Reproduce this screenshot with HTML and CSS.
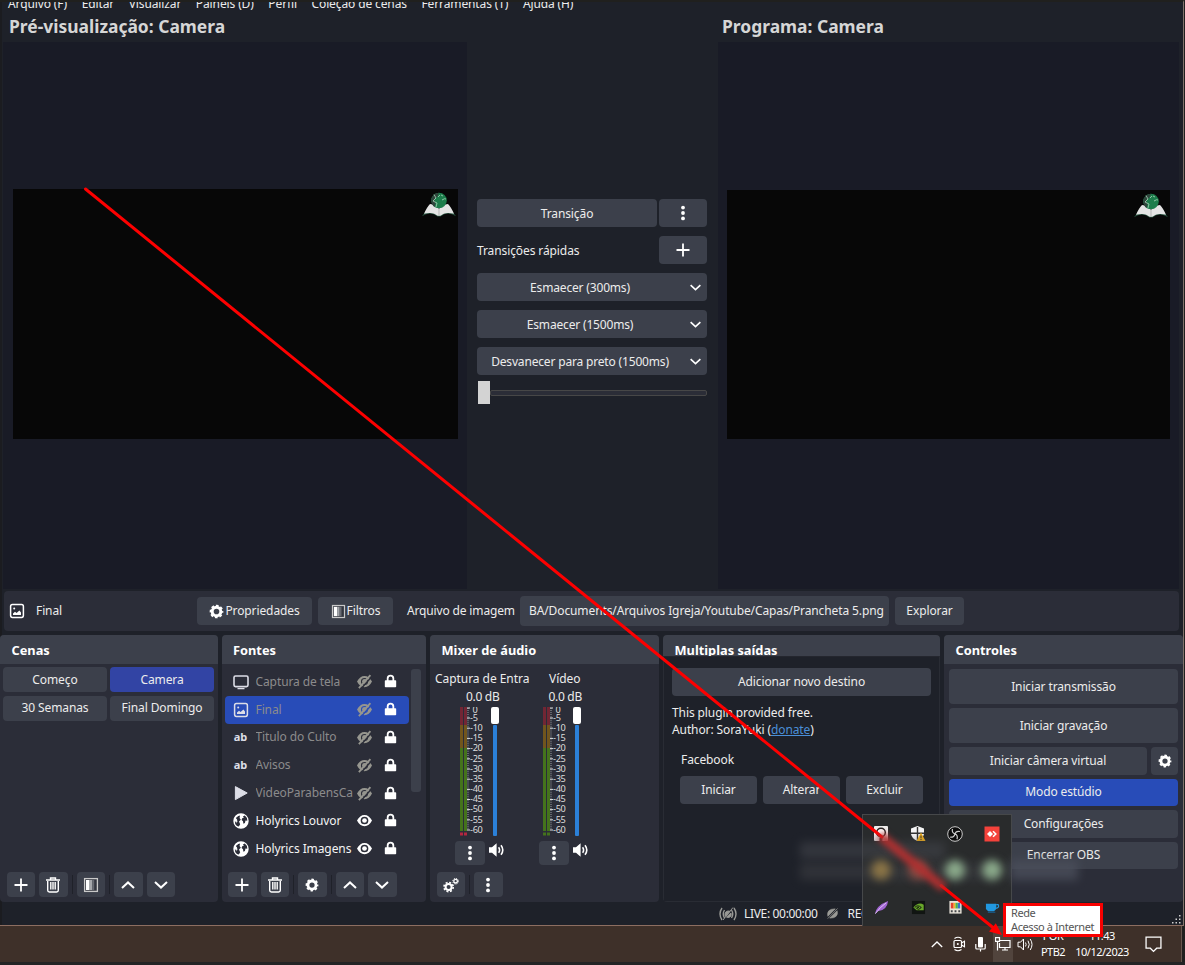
FILE: index.html
```html
<!DOCTYPE html>
<html lang="pt-BR">
<head>
<meta charset="utf-8">
<title>OBS Studio</title>
<link rel="stylesheet" href="styles.css">
</head>
<body>
<svg class="sprite" width="0" height="0">
  <defs>
    <mask id="slash" maskUnits="userSpaceOnUse" x="0" y="0" width="16" height="16"><rect width="16" height="16" fill="#fff"/><path d="M16.500 2L4 16" stroke="#000" stroke-width="1.600"/></mask>
    <symbol id="plus" viewBox="0 0 16 16"><path d="M8 1.500v13M1.500 8h13" fill="none" stroke="currentColor" stroke-width="1.800"/></symbol>
    <symbol id="dots" viewBox="0 0 16 16"><circle cx="8" cy="2.600" r="1.900"/><circle cx="8" cy="8" r="1.900"/><circle cx="8" cy="13.400" r="1.900"/></symbol>
    <symbol id="down" viewBox="0 0 16 16"><path d="M2 5l6 5.600L14 5" fill="none" stroke="currentColor" stroke-width="2"/></symbol>
    <symbol id="up" viewBox="0 0 16 16"><path d="M2 11l6-5.600L14 11" fill="none" stroke="currentColor" stroke-width="2"/></symbol>
    <symbol id="trash" viewBox="0 0 16 16"><path d="M1 3h14M5.500 2.400V1h5v1.400M2.700 4v9.300q0 1.700 1.700 1.700h7.200q1.700 0 1.700-1.700V4M5.800 5v7.600M8 5v7.600M10.200 5v7.600" fill="none" stroke="currentColor" stroke-width="1.400"/></symbol>
    <symbol id="filter" viewBox="0 0 16 16"><rect x="1.600" y="1.600" width="12.800" height="12.800" fill="#33363f" stroke="#c9c9c9" stroke-width="1.300"/><rect x="3" y="3" width="3.600" height="10" fill="#fff"/><rect x="6.600" y="3" width="2.600" height="10" fill="#a5a7ab"/><rect x="9.200" y="3" width="2" height="10" fill="#686b73"/></symbol>
    <symbol id="gear" viewBox="0 0 16 16"><circle cx="8" cy="8" r="4.600" fill="none" stroke="currentColor" stroke-width="3.200"/><circle cx="8" cy="8" r="6.400" fill="none" stroke="currentColor" stroke-width="1.800" stroke-dasharray="2.900 2.126" stroke-dashoffset="1.450"/></symbol>
    <symbol id="gears" viewBox="0 0 16 16"><circle cx="5.600" cy="10" r="3" fill="none" stroke="currentColor" stroke-width="2"/><circle cx="5.600" cy="10" r="4.600" fill="none" stroke="currentColor" stroke-width="1.600" stroke-dasharray="2 1.610"/><circle cx="12.600" cy="4.200" r="1.800" fill="none" stroke="currentColor" stroke-width="1.300"/><circle cx="12.600" cy="4.200" r="2.800" fill="none" stroke="currentColor" stroke-width="1" stroke-dasharray="1.200 1"/></symbol>
    <symbol id="image" viewBox="0 0 16 16"><rect x="1.600" y="1.600" width="12.800" height="12.800" rx="1.800" fill="none" stroke="currentColor" stroke-width="1.500"/><path d="M4 12v-1.600l2-1.600 1.600 1.200L10.400 7.600 12 9.500V12z"/><circle cx="5.200" cy="5.600" r="1"/></symbol>
    <symbol id="monitor" viewBox="0 0 16 16"><rect x="1" y="2" width="14" height="10.600" rx="1.500" fill="none" stroke="currentColor" stroke-width="1.600"/><path d="M4.500 14.600h7" stroke="currentColor" stroke-width="1.300"/></symbol>
    <symbol id="play" viewBox="0 0 16 16"><path d="M2.400 1.600L14.200 8 2.400 14.600z" stroke="currentColor" stroke-linejoin="round"/></symbol>
    <symbol id="globe" viewBox="0 0 16 16"><path fill-rule="evenodd" d="M8 .3a7.700 7.700 0 1 0 0 15.400A7.700 7.700 0 0 0 8 .3zM5.300 3L7 2.500 6.600 5 7.800 6.800 6 8.600l1.200 2.600-1.400 2.400Q1.600 12.500 1.900 8.200L3.800 9.300 4 6.600 2.800 5zM10 3.200l1.800-.8q2.600 1.800 2.500 5.300l-1.800-.2-.6 2.500-1.500.8-.4-2.600L8.600 7l.6-1.800 1.600-.4z"/><path d="M2 6.200l2 .2.800 2L3 10.500z" opacity=".5"/></symbol>
    <symbol id="lock" viewBox="0 0 16 16"><path d="M4.500 8V5a3.500 3.500 0 0 1 7 0v3" fill="none" stroke="currentColor" stroke-width="2.200"/><rect x="1" y="7" width="14" height="8.800" rx="1"/></symbol>
    <symbol id="eye" viewBox="0 0 16 16"><path fill-rule="evenodd" d="M0 8Q3 2 8 2t8 6Q13 14 8 14T0 8zM8 3.900a4.100 4.100 0 1 0 0 8.200 4.100 4.100 0 0 0 0-8.200z"/><circle cx="8" cy="8" r="2.500"/></symbol>
    <symbol id="hidden" viewBox="0 0 16 16"><g mask="url(#slash)"><path fill-rule="evenodd" d="M0 8Q3 2 8 2t8 6Q13 14 8 14T0 8zM8 4.200a3.800 3.800 0 1 0 0 7.600 3.800 3.800 0 0 0 0-7.600z"/><circle cx="8" cy="8" r="2.600"/></g><path d="M14.300 1.200L2 15" stroke="currentColor" stroke-width="1.900"/></symbol>
    <symbol id="speaker" viewBox="0 0 16 16"><path d="M0 5.300h3L7.600 1.300v13.400L3 10.700H0z"/><path d="M9.600 5.200q2 2.800 0 5.600M12 3.200q3.600 4.800 0 9.600" fill="none" stroke="currentColor" stroke-width="1.600"/></symbol>
    <symbol id="bible" viewBox="0 0 34 25">
      <path d="M0 24.300Q4 21.500 8 21.500t7.500 3h3q3.500-3 7.500-3t8 2.800L30 19H4z" fill="#285541"/>
      <path d="M2 21.800Q5 15 8 12q6 .8 9 5 3-4.200 9-5 3 3 6 9.800-9-2.500-13.500 2h-3Q11 19.300 2 21.800z" fill="#e4e4e4"/>
      <path d="M17 15v8" stroke="#b5b5b5"/>
      <circle cx="17" cy="8.500" r="7.800" fill="#1c7d4b"/><path d="M9.300 7q2-5.800 7.700-6.300l-2 4.500-3 2 1.500 4-1 4Q9 12 9.300 7z" fill="#31443c"/>
      <path d="M12 2.500l2 3.500-3 3 4 2-1 4M19 3l2 1M20 8q3-2 4-1M16 5l2-2" fill="none" stroke="#a9d6bb" stroke-width=".8"/>
    </symbol>
    <symbol id="meter" viewBox="0 0 28 130">
      <g fill="#722634"><path d="M0 0h3v18H0zM4 0h3v18H4z"/></g>
      <g fill="#71551d"><path d="M0 18h3v23H0zM4 18h3v23H4z"/></g>
      <g fill="#44731c"><path d="M0 41h3v83H0zM4 41h3v83H4z"/></g>
      <path d="M8 1v122" stroke="#777a80" stroke-width="1.500" stroke-dasharray="1 1.040"/>
      <path d="M7 1h3M7 11h3M7 21.200h3M7 31.400h3M7 41.600h3M7 51.800h3M7 62h3M7 72.200h3M7 82.400h3M7 92.500h3M7 102.600h3M7 112.800h3M7 123h3" stroke="#ddd"/>
      <g class="scale">
        <text x="12.500" y="6.200">0</text><text x="10" y="13.600">-5</text><text x="10" y="23.900">-10</text><text x="10" y="34.100">-15</text><text x="10" y="44.300">-20</text><text x="10" y="54.500">-25</text><text x="10" y="64.700">-30</text><text x="10" y="74.900">-35</text><text x="10" y="85.100">-40</text><text x="10" y="95.200">-45</text><text x="10" y="105.400">-50</text><text x="10" y="115.600">-55</text><text x="10" y="125.800">-60</text>
      </g>
    </symbol>
  </defs>
</svg>

<div class="screen">
  <div class="window">
    <nav class="menu"><span>Arquivo (F)</span><span>Editar</span><span>Visualizar</span><span>Painéis (D)</span><span>Perfil</span><span>Coleção de cenas</span><span>Ferramentas (T)</span><span>Ajuda (H)</span></nav>

    <main class="studio">
      <section class="view">
        <h1>Pré-visualização: Camera</h1>
        <div class="canvas"><div class="video"><svg class="bible"><use href="#bible"/></svg></div></div>
      </section>
      <section class="transitions">
        <div class="line"><button class="btn grow">Transição</button><button class="btn sq"><svg class="i16"><use href="#dots"/></svg></button></div>
        <div class="line"><span class="grow quick">Transições rápidas</span><button class="btn sq"><svg class="i16"><use href="#plus"/></svg></button></div>
        <button class="btn combo"><span>Esmaecer (300ms)</span><svg class="i12"><use href="#down"/></svg></button>
        <button class="btn combo"><span>Esmaecer (1500ms)</span><svg class="i12"><use href="#down"/></svg></button>
        <button class="btn combo"><span>Desvanecer para preto (1500ms)</span><svg class="i12"><use href="#down"/></svg></button>
        <div class="tbar"><b></b><i></i></div>
      </section>
      <section class="view program">
        <h1>Programa: Camera</h1>
        <div class="canvas"><div class="video"><svg class="bible"><use href="#bible"/></svg></div></div>
      </section>
    </main>

    <div class="source-bar">
      <svg class="i16 pic"><use href="#image"/></svg><span class="src-name">Final</span>
      <button class="btn props"><svg class="i15"><use href="#gear"/></svg>Propriedades</button>
      <button class="btn filters"><svg class="i15"><use href="#filter"/></svg>Filtros</button>
      <span class="file-label">Arquivo de imagem</span>
      <div class="field">BA/Documents/Arquivos Igreja/Youtube/Capas/Prancheta 5.png</div>
      <button class="btn browse">Explorar</button>
    </div>

    <div class="docks">
      <section class="dock scenes">
        <h2>Cenas</h2>
        <div class="scene-grid"><button class="btn">Começo</button><button class="btn on">Camera</button><button class="btn">30 Semanas</button><button class="btn">Final Domingo</button></div>
        <div class="tools"><button class="btn"><svg class="i16"><use href="#plus"/></svg></button><button class="btn"><svg class="i16"><use href="#trash"/></svg></button><i></i><button class="btn"><svg class="i16"><use href="#filter"/></svg></button><i></i><button class="btn"><svg class="i16"><use href="#up"/></svg></button><button class="btn"><svg class="i16"><use href="#down"/></svg></button></div>
      </section>

      <section class="dock sources">
        <h2>Fontes</h2>
        <div class="list-wrap">
          <ul class="list">
            <li class="off"><svg class="i16"><use href="#monitor"/></svg><span>Captura de tela</span><svg class="i15 vis"><use href="#hidden"/></svg><svg class="lock"><use href="#lock"/></svg></li>
            <li class="off sel"><svg class="i16"><use href="#image"/></svg><span>Final</span><svg class="i15 vis"><use href="#hidden"/></svg><svg class="lock"><use href="#lock"/></svg></li>
            <li class="off"><b class="ab">ab</b><span>Titulo do Culto</span><svg class="i15 vis"><use href="#hidden"/></svg><svg class="lock"><use href="#lock"/></svg></li>
            <li class="off"><b class="ab">ab</b><span>Avisos</span><svg class="i15 vis"><use href="#hidden"/></svg><svg class="lock"><use href="#lock"/></svg></li>
            <li class="off"><svg class="i16"><use href="#play"/></svg><span>VideoParabensCa</span><svg class="i15 vis"><use href="#hidden"/></svg><svg class="lock"><use href="#lock"/></svg></li>
            <li><svg class="i16 white"><use href="#globe"/></svg><span>Holyrics Louvor</span><svg class="i15 vis"><use href="#eye"/></svg><svg class="lock"><use href="#lock"/></svg></li>
            <li><svg class="i16 white"><use href="#globe"/></svg><span>Holyrics Imagens</span><svg class="i15 vis"><use href="#eye"/></svg><svg class="lock"><use href="#lock"/></svg></li>
          </ul>
          <div class="scroll"></div>
        </div>
        <div class="tools"><button class="btn"><svg class="i16"><use href="#plus"/></svg></button><button class="btn"><svg class="i16"><use href="#trash"/></svg></button><i></i><button class="btn"><svg class="i14"><use href="#gear"/></svg></button><i></i><button class="btn"><svg class="i16"><use href="#up"/></svg></button><button class="btn"><svg class="i16"><use href="#down"/></svg></button></div>
      </section>

      <section class="dock mixer">
        <h2>Mixer de áudio</h2>
        <div class="channels">
          <div class="channel">
            <div class="ch-name">Captura de Entra</div><div class="db">0.0 dB</div>
            <div class="levels"><svg class="meter"><use href="#meter"/><path d="M0 125.500h3v3H0zM4 125.500h3v3H4z" fill="#b3263f"/></svg><div class="fader"><b></b><i></i></div></div>
            <div class="ch-tools"><button class="btn"><svg class="i16"><use href="#dots"/></svg></button><svg class="i16 spk"><use href="#speaker"/></svg></div>
          </div>
          <div class="channel">
            <div class="ch-name">Vídeo</div><div class="db">0.0 dB</div>
            <div class="levels"><svg class="meter"><use href="#meter"/><path d="M0 125.500h3v3H0zM4 125.500h3v3H4z" fill="#44731c"/></svg><div class="fader"><b></b><i></i></div></div>
            <div class="ch-tools"><button class="btn"><svg class="i16"><use href="#dots"/></svg></button><svg class="i16 spk"><use href="#speaker"/></svg></div>
          </div>
        </div>
        <div class="tools"><button class="btn"><svg class="i16"><use href="#gears"/></svg></button><i></i><button class="btn"><svg class="i16"><use href="#dots"/></svg></button></div>
      </section>

      <section class="dock outputs">
        <h2>Multiplas saídas</h2>
        <div class="out-body">
          <button class="btn add">Adicionar novo destino</button>
          <p>This plugin provided free.<br>Author: SoraYuki (<a>donate</a>)</p>
          <div class="target">Facebook</div>
          <div class="target-btns"><button class="btn">Iniciar</button><button class="btn">Alterar</button><button class="btn">Excluir</button></div>
        </div>
      </section>

      <section class="dock controls">
        <h2>Controles</h2>
        <div class="ctl">
          <button class="btn tall">Iniciar transmissão</button>
          <button class="btn tall">Iniciar gravação</button>
          <div class="vcam"><button class="btn grow">Iniciar câmera virtual</button><button class="btn vgear"><svg class="i14"><use href="#gear"/></svg></button></div>
          <button class="btn blue">Modo estúdio</button>
          <button class="btn">Configurações</button>
          <button class="btn">Encerrar OBS</button>
        </div>
      </section>
    </div>

    <footer class="status">
      <svg class="live" viewBox="0 0 18 14"><path d="M3 1Q-1 7 3 13M5.500 3Q3 7 5.500 11M15 1q4 6 0 12M12.500 3q2.500 4 0 8" fill="none" stroke="#9a9a96" stroke-width="1.400"/><path d="M6 8.500Q5.500 4 9.500 4l1.500.3-4.500 5zM12 6q1 4.500-3.500 4.500L7.500 10zM14 .5L4 13" fill="#9a9a96" stroke="#9a9a96"/></svg>
      <span>LIVE: 00:00:00</span>
      <svg class="rec" viewBox="0 0 12 12"><path d="M1 9Q-1 1 9 1zM11 3Q13 11 3 11zM11.500.5L.8 11.600" fill="#9a9a96" stroke="#9a9a96" stroke-width=".8"/></svg>
      <span>REC</span>
    </footer>
  </div>

  <div class="taskbar">
    <svg class="tk up" viewBox="0 0 12 7"><path d="M.8 6L6 1l5.200 5" fill="none" stroke="#fff" stroke-width="1.300"/></svg>
    <svg class="tk cam" viewBox="0 0 13 16"><rect x="1" y="4.500" width="7.500" height="7" rx="1" fill="none" stroke="#fff" stroke-width="1.200"/><path d="M8.500 7l3-1.800v5.600l-3-1.800M1.500 2.500Q5 0 8.500 2.500M1.500 13.500Q5 16 8.500 13.500" fill="none" stroke="#fff" stroke-width="1.100"/><circle cx="4.800" cy="8" r="1" fill="#fff"/></svg>
    <svg class="tk mic" viewBox="0 0 11 15"><rect x="3" y="0" width="5" height="10.500" rx="1" fill="#fff"/><path d="M.8 7v4q0 1 1 1h7.400q1 0 1-1V7M5.500 12v2.500" fill="none" stroke="#fff" stroke-width="1.200"/></svg>
    <div class="net"><svg viewBox="0 0 16 14"><path d="M5 3.500h10v7H4.500V6M7 13h6M10 10.500V13M.5.600h4v3.800h-4zM2.500 4.400v9" fill="none" stroke="#fff" stroke-width="1.200"/></svg></div>
    <svg class="tk vol" viewBox="0 0 17 14"><path d="M1 4.700h2.500L6.500 1.500v11l-3-3.200H1z" fill="none" stroke="#fff"/><path d="M8.500 5q1.300 2 0 4M11 3.200q2.500 3.800 0 7.600M13.200 1.500q3.600 5.500 0 11" fill="none" stroke="#fff"/></svg>
    <div class="lang"><span>POR</span><span>PTB2</span></div>
    <div class="clock"><span>11:43</span><span>10/12/2023</span></div>
    <svg class="tk note" viewBox="0 0 16 16"><path d="M1 1h14v10.500h-4L8 14.500l-3-3H1z" fill="none" stroke="#fff" stroke-width="1.200"/></svg>
  </div>
  <div class="bottom-edge"></div>

  <div class="tray">
    <svg viewBox="0 0 16 16"><rect x="1" width="14" height="15" rx="1" fill="#eee"/><circle cx="8" cy="6.500" r="4.300" fill="#fff" stroke="#222" stroke-width="1.500"/><path d="M6.500 11.500h3V15h-3z" fill="#333"/></svg>
    <svg viewBox="0 0 16 16"><path d="M7.500 0L14 2.500V8q-1 5-6.500 7Q2 13 1 8V2.500z" fill="#f4f4f4"/><path d="M7.500 1v13M1 7.200h13" stroke="#333" stroke-width="1.400"/><path d="M11 6.500l4.500 8.500h-9z" fill="#f2b01e"/><path d="M11 9.500v2.800M11 13v1" stroke="#333"/></svg>
    <svg viewBox="0 0 16 16"><circle cx="8" cy="8" r="7.300" fill="#0c0c0c" stroke="#ccc" stroke-width="1"/><path d="M5.500 3q-1 3.800 2.500 4.800 1-3.300 5-2.300M8 7.800q-.8 3.700-4.800 3.400M8 7.800q3.200 1.600 2 5.400" fill="none" stroke="#ccc" stroke-width="1.200"/></svg>
    <svg viewBox="0 0 16 16"><path d="M.5.500h15v15H.5z" fill="#f4423b"/><path d="M6 5L9 8l-3 3-3-3z" fill="#fff"/><path d="M9 5.200L11.800 8 9 10.800" fill="none" stroke="#fff" stroke-width="1.600"/></svg>
    <svg viewBox="0 0 16 16"><path d="M1 15Q2 6 15 1q-1 10-11 11z" fill="#a165d3"/><path d="M1.500 14.500Q6 8 13 3" stroke="#e4c9f7" fill="none"/></svg>
    <svg viewBox="0 0 16 16"><path d="M1 1h14v14H1z" fill="#111512"/><path d="M2.500 8Q8 1.500 13.500 5v6H6z" fill="#69a82a"/><path d="M4 8q3-3.500 7 0-3 3.500-5 1 .5-2 2.500-1" fill="none" stroke="#10150c"/></svg>
    <svg viewBox="0 0 16 16"><path d="M1.500 1h13v13.500h-13z" fill="#e8e3d8"/><path d="M3 3h3v6H3z" fill="#e3432f"/><path d="M6 3h2v6H6z" fill="#f5b329"/><path d="M8 3h2.500v6H8z" fill="#4bb749"/><path d="M10.500 3H13v6h-2.500z" fill="#3970c9"/><path d="M3 11h2v2H3zM7 11h2v2H7zM11 11h2v2h-2z" fill="#45484b"/></svg>
    <svg viewBox="0 0 16 16"><path d="M1 4h11v5q-1 3-4 3H5Q2 12 1 9z" fill="#2198e0"/><path d="M12 5h2q2 3-3 4" fill="none" stroke="#2198e0" stroke-width="1.300"/><path d="M3 13h8" stroke="#1567a3"/></svg>
  </div>

  <div class="smudges"><i class="s1"></i><i class="s2"></i><i class="s3"></i><i class="dot gold"></i><i class="dot rust"></i><i class="dot green"></i><i class="dot green g2"></i></div>

  <svg class="grip" viewBox="0 0 9 9"><path d="M7 0h1.500v1.500H7zM3.500 3.500H5V5H3.500zM7 3.500h1.500V5H7zM0 7h1.500v1.500H0zM3.500 7H5v1.500H3.500zM7 7h1.500v1.500H7z" fill="#d0d0d0"/></svg>
  <svg class="arrow" viewBox="0 0 1185 965">
    <path d="M85.500 189L882 837M941 885.500L996 930" stroke="#fd0000" stroke-width="3" stroke-linecap="round"/>
    <path class="haze" d="M880 835.500L944 888" stroke="#b03030" stroke-width="9"/>
    <path d="M1002 935L989 931.500 995.800 923.200z" fill="#fd0000"/>
  </svg>
  <div class="tip">Rede<br>Acesso à Internet</div>
</div>
</body>
</html>
```
FILE: styles.css
```css
* { box-sizing: border-box; }
body { margin: 0; background: #1e2129; }
.sprite { position: absolute; }
svg { fill: currentColor; display: block; flex: none; }
.screen { position: relative; width: 1185px; height: 965px; overflow: hidden; font: 12px/16px "Noto Sans", sans-serif; letter-spacing: -.1px; color: #ececec; background: #20201f; }
.window { height: 926px; width: 1184px; background: #1e2129; border-top: 2px solid #20201e; border-right: 1px solid #80736c; border-bottom: 1px solid #8d6e61; overflow: hidden; box-shadow: inset 2px 0 #1b1c20; display: flex; flex-direction: column; }
.menu { height: 12px; display: flex; align-items: flex-end; gap: 14.600px; padding: 0 0 2px 8px; white-space: nowrap; overflow: hidden; flex: none; letter-spacing: -.12px; }

.btn { font: inherit; letter-spacing: inherit; color: inherit; background: #3c404b; border: 0; border-radius: 4px; padding: 0; display: flex; align-items: center; justify-content: center; white-space: nowrap; height: 28px; }
.grow { flex: 1; }
.i16 { width: 16px; height: 16px; color: #fff; }
.i15 { width: 15px; height: 15px; color: #fff; }
.i14 { width: 14px; height: 14px; color: #fff; }
.i12 { width: 13px; height: 13px; color: #fff; }

.studio { display: flex; height: 575px; flex: none; }
.view { width: 464px; margin-left: 3px; display: flex; flex-direction: column; }
.view h1 { margin: 0; height: 28px; padding-left: 6px; font-size: 17.450px; line-height: 24px; font-weight: 700; letter-spacing: 0; color: #d6d6d6; white-space: nowrap; }
.canvas { flex: 1; background: #191b26; padding: 147px 9.500px 0 10px; }
.video { height: 250px; background: #070707; display: flex; justify-content: flex-end; }
.bible { width: 34px; height: 25px; margin: 3px 2px 0 0; }
.program { width: 461px; margin-left: 0; }
.program h1 { padding-left: 4px; }
.program .canvas { padding: 148px 9px 0; }
.program .video { height: 249px; }
.transitions { width: 251px; padding: 185px 11px 0 10px; display: flex; flex-direction: column; gap: 9px; }
.line { display: flex; align-items: center; gap: 2px; height: 28px; }
.line .btn.grow { padding-top: 1px; }
.quick { padding-top: 2px; }
.sq { width: 48px; }
.combo { padding-right: 5px; letter-spacing: -.17px; }
.combo span { flex: 1; text-align: center; padding: 1px 6px 0 0; }
.tbar { height: 24px; margin-top: -4px; display: flex; align-items: center; }
.tbar i { flex: 1; height: 6px; margin-top: 2px; border: 1px solid #474747; border-radius: 2px; background: #2b2d37; }
.tbar b { width: 12px; height: 23px; margin-left: 1px; background: #d3d3d3; }

.source-bar { height: 40px; margin: 2px 4px 4px; background: #2b2d38; border-radius: 4px; display: flex; align-items: center; flex: none; white-space: nowrap; }
.source-bar .btn svg { margin-right: 1px; }
.pic { margin-left: 5px; }
.src-name { width: 173px; padding-left: 11px; }
.props { width: 115px; margin-left: -1px; }
.filters { width: 75px; margin-left: 6px; }
.file-label { width: 113px; margin-left: 14px; letter-spacing: -.15px; }
.field { width: 369px; height: 30px; padding-left: 9px; line-height: 30px; background: #3c404b; border-radius: 4px; letter-spacing: -.11px; }
.browse { width: 69px; margin-left: 6px; }

.docks { display: flex; height: 267px; gap: 4px; flex: none; }
.dock { background: #2b2d38; border-radius: 4px; display: flex; flex-direction: column; overflow: hidden; flex: none; }
.dock h2 { margin: 0; height: 29px; padding-left: 11.500px; font-size: 12.800px; line-height: 30px; font-weight: 700; letter-spacing: 0; color: #fff; background: #3c404b; flex: none; }
.scenes { width: 217.500px; }
.sources { width: 204.500px; }
.mixer { width: 229px; }
.outputs { width: 277px; }
.controls { width: 238.500px; }
.tools { display: flex; gap: 4px; padding-left: 6.500px; margin: auto 0 5px; align-items: center; }
.tools .btn { width: 28.500px; height: 25px; }
.tools i { width: 1px; height: 19px; background: #1f2129; }
.scene-grid { display: grid; grid-template-columns: 104px 104px; gap: 3.500px 3px; padding: 3px 3px 0; }
.scene-grid .btn { height: 25px; }
.scene-grid .on { background: #3244a4; }

.list-wrap { display: flex; gap: 2px; padding: 4px 0 0 3px; }
.list { list-style: none; margin: 0; padding: 0; width: 184.500px; }
.list li { height: 27.800px; display: flex; align-items: center; padding-left: 8px; border-radius: 4px; }
.list li > .i16 { color: #dcdde6; }
.list li > .white { color: #fff; }
.list span { width: 98.500px; margin-left: 7px; overflow: hidden; white-space: nowrap; color: #f4f4f4; }
.list .off span { color: #8b8b8c; }
.vis { margin-left: 3px; }
.off .vis { color: #96968f; }
.lock { width: 13px; height: 14px; color: #fff; margin-left: 12px; margin-top: -1px; }
.list .sel { background: #284cb8; }
.ab { width: 16px; font-size: 11px; text-align: center; color: #dcdde6; }
.scroll { width: 10px; height: 123px; margin-top: 1px; background: #3c404b; border-radius: 3px; }

.channels { display: flex; gap: 5px; padding: 7px 0 0 5px; }
.channel { width: 77.500px; }
.channel + .channel { width: 95px; }
.ch-name { width: 100px; height: 16px; overflow: hidden; white-space: nowrap; letter-spacing: -.05px; }
.channel + .channel .ch-name { padding-left: 31.500px; }
.db { padding: 2px 0 0 31px; white-space: nowrap; letter-spacing: -.3px; }
.levels { display: flex; padding: 2px 0 0 25px; }
.meter { width: 28px; height: 130px; overflow: visible; }
.scale { font-size: 9.200px; letter-spacing: -.3px; fill: #ddd; }
.fader { margin-left: 2px; width: 9px; display: flex; flex-direction: column; align-items: center; }
.fader b { width: 8px; height: 17px; background: #fff; border-radius: 2px; flex: none; }
.fader i { width: 4px; height: 111px; margin-top: 1px; background: #2b80d8; border-radius: 1px; }
.ch-tools { display: flex; gap: 4px; padding: 4px 0 0 20px; }
.channel + .channel .ch-tools { padding-left: 21.500px; }
.ch-tools .btn { width: 30px; height: 24px; }
.spk { margin-top: 1px; }

.outputs { background: #1e2129; }
.outputs h2 { height: 21px; overflow: hidden; }
.out-body { flex: 1; border: 1px solid #292c34; border-top-color: #24262e; padding: 11px 8px 0; }
.out-body p { margin: 9px 0 0; line-height: 16.500px; letter-spacing: -.1px; }
.out-body a { color: #4a8fd8; text-decoration: underline; }
.add { width: 259px; }
.target { margin: 14px 0 0 9px; }
.target-btns { display: flex; gap: 6px; margin: 8px 0 0 8px; }
.target-btns .btn { width: 77px; }

.ctl { padding: 5px 4.500px 0 5px; display: flex; flex-direction: column; gap: 4px; letter-spacing: -.12px; }
.ctl .btn { height: 27.500px; flex-shrink: 0; }
.ctl .tall { height: 35px; }
.ctl .grow { flex: 1; }
.vcam { display: flex; gap: 4px; }
.vgear { width: 27px; }
.ctl .blue { background: #284cb8; }

.status { height: 24px; display: flex; align-items: center; padding-left: 719px; white-space: nowrap; letter-spacing: -.33px; }
.live { width: 18px; height: 14px; margin-right: 7px; }
.rec { width: 11px; height: 11px; margin: 0 10px 0 9px; }

.taskbar { height: 36px; background: #3e3029; display: flex; padding: 0 0 0 931px; align-items: center; width: 1182px; border-right: 1px solid #66564e; font-size: 11px; letter-spacing: -.5px; }
.bottom-edge { height: 3px; background: #232425; }
.tk { width: 16px; height: 15px; }
.tk.up { width: 12px; height: 7px; }
.tk.cam { width: 13px; height: 16px; margin-left: 10px; }
.tk.mic { width: 11px; margin-left: 9px; }
.net { width: 20px; height: 36px; margin-left: 7px; background: #51443d; display: flex; align-items: center; justify-content: center; flex: none; }
.net svg { width: 16px; height: 14px; }
.tk.vol { width: 17px; margin-left: 4px; }
.lang { width: 26px; margin-left: 6px; }
.clock { width: 56px; margin-left: 8px; }
.lang, .clock { display: flex; flex-direction: column; align-items: center; line-height: 16px; white-space: nowrap; color: #fff; flex: none; }
.tk.note { margin-left: 15px; width: 17px; height: 17px; }

.tray { position: absolute; left: 862px; top: 814px; width: 150px; height: 112px; background: #292b2c; border: 1px solid #46484a; border-bottom: 0; display: grid; grid-template-columns: repeat(4, 37px); grid-template-rows: 37px 74px; justify-items: center; align-items: center; }
.tray svg { width: 15px; height: 15px; }
.tray svg:nth-child(-n+4) { width: 16px; height: 16px; margin-left: -1px; }
.tray svg:nth-child(n+5) { margin-top: 36px; }
.smudges { position: absolute; left: 790px; top: 820px; width: 300px; height: 80px; }
.smudges i { position: absolute; filter: blur(5px); }
.smudges .s1 { left: 10px; top: 22px; width: 145px; height: 17px; background: #41434a; opacity: .6; }
.smudges .s2 { left: 10px; top: 43px; width: 200px; height: 17px; background: #3c3d42; opacity: .6; }
.smudges .s3 { left: 220px; top: 40px; width: 68px; height: 20px; background: #4b4f5b; opacity: .8; }
.smudges .dot { left: 81px; top: 40px; width: 20px; height: 20px; border-radius: 50%; filter: blur(4px); }
.smudges .gold { background: #8a7446; }
.smudges .rust { left: 118px; background: #864b43; }
.smudges .green { left: 155px; background: #8aa98a; }
.smudges .g2 { left: 192px; }
.grip { position: absolute; left: 1172px; top: 915px; width: 9px; height: 9px; }
.arrow { position: absolute; left: 0; top: 0; width: 1185px; height: 965px; }
.haze { filter: blur(3px); }
.tip { position: absolute; left: 1003px; top: 903px; width: 100px; height: 34px; border: 3px solid #f80000; background: #fff; color: #555; font-size: 11px; line-height: 14px; letter-spacing: -.4px; padding: 0 0 0 5px; white-space: nowrap; }
```
